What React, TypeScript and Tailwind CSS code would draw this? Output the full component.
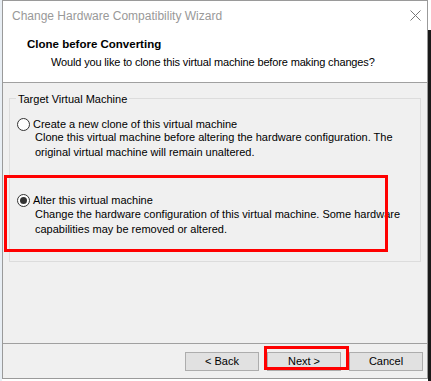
import React from 'react';

const font = { fontFamily: '"Liberation Sans", Arial, sans-serif' };

const Radio: React.FC<{ checked?: boolean }> = ({ checked }) => (
  <span className="w-[13px] h-[13px] rounded-full border border-[#333] bg-white flex items-center justify-center shrink-0">
    {checked && <span className="w-[7px] h-[7px] rounded-full bg-[#333]" />}
  </span>
);

const WizButton: React.FC<{ label: string }> = ({ label }) => (
  <button className="w-[74px] h-[19px] bg-[#e1e1e1] border border-[#adadad] text-[11px] leading-none text-black">
    {label}
  </button>
);

const App: React.FC = () => {
  return (
    <div className="w-[431px] h-[381px] bg-white flex overflow-hidden text-black whitespace-nowrap" style={font}>
      {/* bits of the window behind */}
      <div className="w-[2px] h-full bg-[#e8eef4]" />

      <div className="relative w-[426px] h-[379px] border border-[#9a9a9a] flex flex-col">
        {/* title bar */}
        <div className="h-[29px] bg-white flex items-center justify-between pl-[9px] pr-[6px]">
          <span className="text-[12px] text-[#999]">Change Hardware Compatibility Wizard</span>
          <svg width="11" height="11" viewBox="0 0 11 11">
            <path d="M0.5 0.5 L10.5 10.5 M10.5 0.5 L0.5 10.5" stroke="#777" strokeWidth="1" />
          </svg>
        </div>

        {/* header */}
        <div className="h-[53px] bg-white border-b border-[#a0a0a0] pl-[24px] pt-[5px]">
          <div className="text-[11.5px] font-bold leading-[18px]">Clone before Converting</div>
          <div className="text-[11px] leading-[18px] pl-[24px] tracking-[-0.15px]">Would you like to clone this virtual machine before making changes?</div>
        </div>

        {/* body */}
        <div className="flex-1 bg-[#f0f0f0] px-[6px] pt-[15px]">
          <div className="relative h-[164px] border border-[#dcdcdc] pl-[7px] pt-[18px]">
            <span className="absolute -top-[8px] left-[6px] bg-[#f0f0f0] px-[2px] text-[11px] leading-[16px]">
              Target Virtual Machine
            </span>

            <div className="flex flex-col">
              <div className="flex items-center gap-[3px] h-[14px]">
                <Radio />
                <span className="text-[11px] leading-[15px]">Create a new clone of this virtual machine</span>
              </div>
              <div className="pl-[18px] -mt-[1px] text-[11px] leading-[15px]">
                Clone this virtual machine before altering the hardware configuration. The
                <br />
                original virtual machine will remain unaltered.
              </div>
            </div>

            <div className="flex flex-col mt-[33px]">
              <div className="flex items-center gap-[3px] h-[14px]">
                <Radio checked />
                <span className="text-[11px] leading-[15px]">Alter this virtual machine</span>
              </div>
              <div className="pl-[18px] text-[11px] leading-[15px]">
                Change the hardware configuration of this virtual machine. Some hardware
                <br />
                capabilities may be removed or altered.
              </div>
            </div>
          </div>
        </div>

        {/* footer */}
        <div className="h-[35px] bg-[#f0f0f0] border-t border-[#a0a0a0] flex justify-end items-start gap-[8px] pt-[8px] pr-[4px]">
          <WizButton label="< Back" />
          <WizButton label="Next >" />
          <WizButton label="Cancel" />
        </div>

        {/* red highlight marks */}
        <div className="absolute left-[1px] top-[174px] w-[384px] h-[77px] border-[3px] border-[#ff0000]" />
        <div className="absolute left-[261px] top-[345px] w-[85px] h-[24px] border-[3px] border-[#ff0000]" />
      </div>

      <div className="w-[3px] h-full flex flex-col">
        <div className="h-[30px] bg-white" />
        <div className="flex-1 bg-[#1a1a1a]" />
      </div>
    </div>
  );
};

export default App;
